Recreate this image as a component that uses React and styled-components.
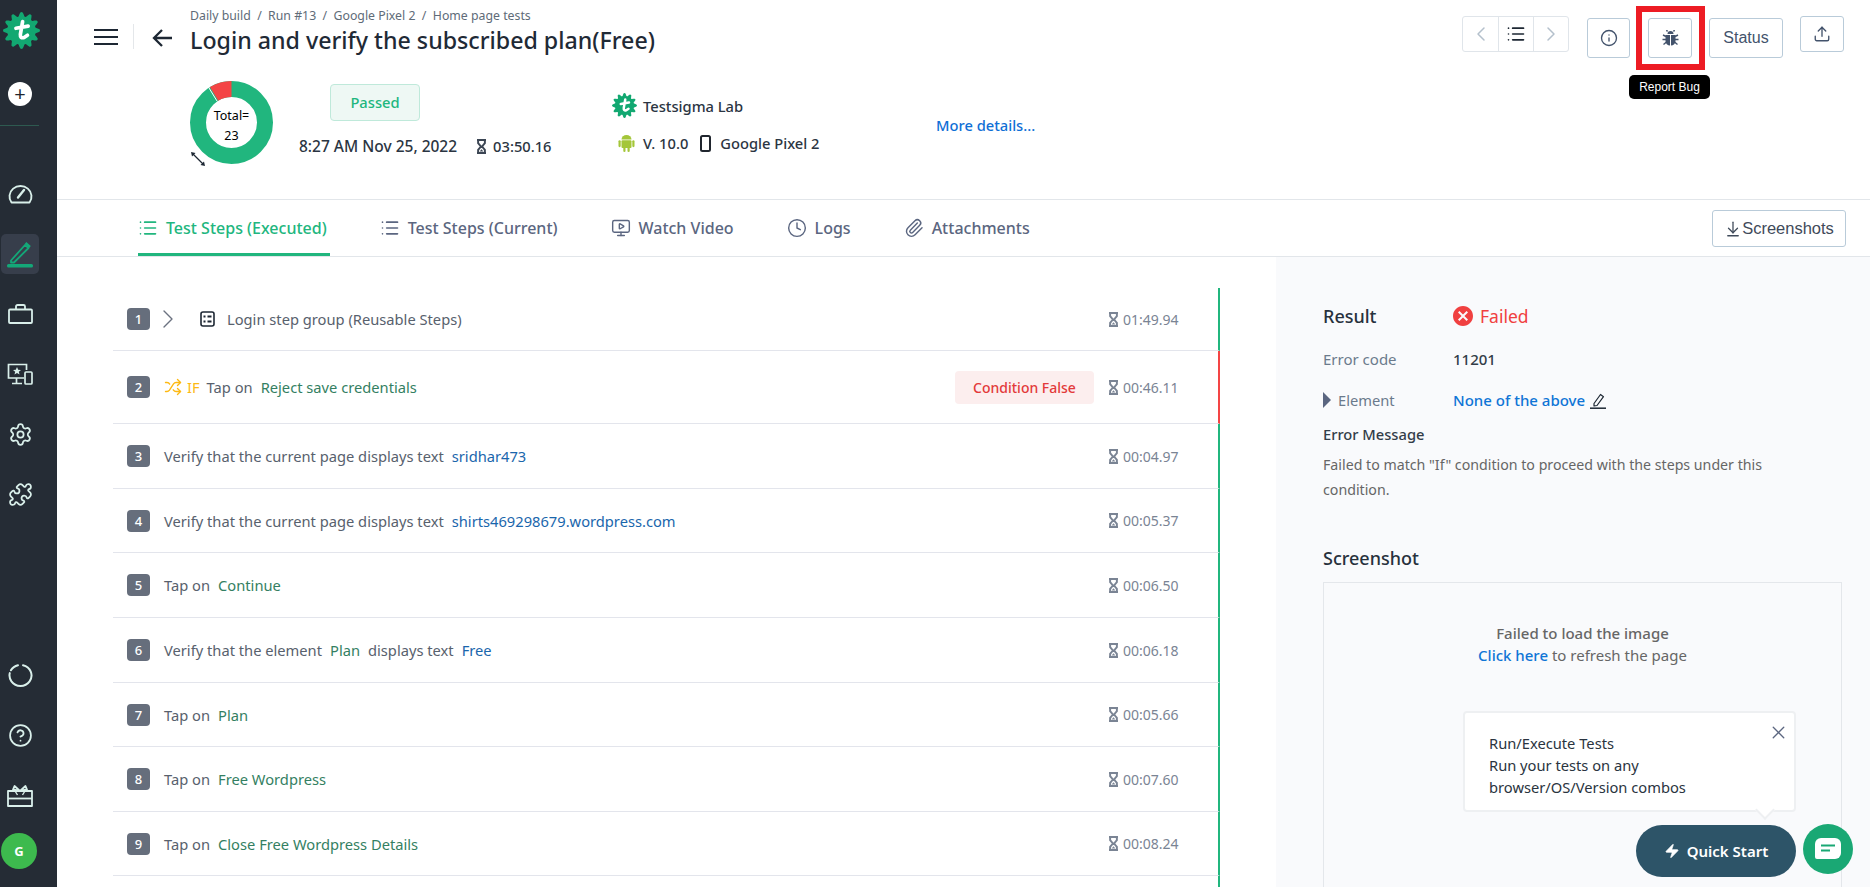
import React from 'react';
import styled, { createGlobalStyle } from 'styled-components';
import {
  ArrowDownToLine, ChevronLeft, ChevronRight, CircleHelp, Clock, Info,
  List, MonitorPlay, Paperclip, Puzzle, Settings, Shuffle, Upload, X, Zap,
} from 'lucide-react';
import { MdCancel } from 'react-icons/md';

const GlobalStyle = createGlobalStyle`
  html, body {
    margin: 0;
    height: 887px;
    overflow: hidden;
    background: #fff;
  }
  body {
    font-family: "Noto Sans", "Liberation Sans", sans-serif;
    font-size: 14.7px;
    color: #333;
  }
  * { box-sizing: border-box; }
`;

const Page = styled.div`
  position: relative;
  display: flex;
  width: 1870px;
  height: 887px;
  overflow: hidden;
`;

/* sidebar */
const Sidebar = styled.nav`
  flex: none;
  width: 57px;
  height: 100%;
  padding: 12px 0 18px;
  display: flex;
  flex-direction: column;
  background: #252c35;
  color: #d9efea;
`;

const LogoSlot = styled.div`
  width: 38px;
  margin-left: 2px;
  height: 36px;
  display: flex;
  justify-content: center;
`;

const PlusButton = styled.div`
  width: 24px;
  height: 24px;
  margin: 34px 0 0 8px;
  border-radius: 50%;
  background: #fff;
  color: #20262e;
  display: flex;
  align-items: center;
  justify-content: center;
  font-size: 20px;
  line-height: 1;
`;

const SideDivider = styled.div`
  width: 39px;
  height: 1px;
  margin: 19px 0 48px;
  background: #2e5a50;
`;

const NavItem = styled.div`
  width: 38px;
  height: 40px;
  margin: 0 0 20px 1px;
  border-radius: 5px;
  display: flex;
  align-items: center;
  justify-content: center;
  background: ${(p) => (p.$active ? '#373e4b' : 'transparent')};
`;

const BottomNav = styled.div`
  margin-top: auto;
  display: flex;
  flex-direction: column;
`;

const Avatar = styled.div`
  width: 36px;
  height: 36px;
  margin: -2px 0 0 1px;
  border-radius: 50%;
  background: #3dba4e;
  color: #fff;
  font-size: 13px;
  font-weight: 700;
  display: flex;
  align-items: center;
  justify-content: center;
`;

/* header */
const Main = styled.main`
  flex: 1;
  min-width: 0;
  display: flex;
  flex-direction: column;
`;

const Header = styled.header`
  flex: none;
  height: 200px;
  border-bottom: 1px solid #e2e6ea;
`;

const TopRow = styled.div`
  height: 69px;
  display: flex;
  align-items: flex-start;
  padding: 0 26px 0 37px;
`;

const MenuButton = styled.div`
  margin-top: 28px;
  width: 24px;
  height: 18px;
  color: #1d2733;
  display: flex;
`;

const HeadSeparator = styled.div`
  width: 1px;
  height: 25px;
  margin: 24px 18px 0 15px;
  background: #e4e7ea;
`;

const BackButton = styled.div`
  margin: 29px 18px 0 0;
  width: 20px;
  height: 18px;
  color: #1d2733;
  display: flex;
`;

const TitleBlock = styled.div`
  padding-top: 7px;
`;

const Breadcrumb = styled.div`
  height: 18px;
  line-height: 18px;
  font-size: 12.3px;
  color: #606b78;
  white-space: nowrap;
`;

const Title = styled.h1`
  margin: 0;
  height: 30px;
  line-height: 30px;
  font-size: 23.2px;
  font-weight: 500;
  color: #1f2a36;
  white-space: nowrap;
`;

const Actions = styled.div`
  margin-left: auto;
  display: flex;
  align-items: flex-start;
`;

const Pager = styled.div`
  margin: 16px 18px 0 0;
  display: flex;
  height: 36px;
  border: 1px solid #e0e5ea;
  border-radius: 3px;
`;

const PagerCell = styled.div`
  width: 35px;
  display: flex;
  align-items: center;
  justify-content: center;
  color: ${(p) => (p.$muted ? '#b4c0cc' : '#1d2733')};
  & + & {
    border-left: 1px solid #e0e5ea;
  }
`;

const ActionButton = styled.div`
  flex: none;
  margin-top: ${(p) => p.$top}px;
  margin-left: ${(p) => p.$left || 0}px;
  width: ${(p) => p.$width}px;
  height: ${(p) => p.$height || 40}px;
  border: 1px solid #b9cbd9;
  border-radius: 3px;
  background: #fff;
  color: #43536c;
  display: flex;
  align-items: center;
  justify-content: center;
  font-family: "Liberation Sans", Arial, sans-serif;
  font-size: 16px;
`;

const Highlight = styled.div`
  position: relative;
  flex: none;
  width: 69px;
  height: 64px;
  margin: 6px 4px 0 6px;
  padding: 6px;
  border: 6px solid #ed1c24;
  & > div {
    margin-top: 0;
  }
`;

const Tooltip = styled.div`
  position: absolute;
  top: 63px;
  left: -13px;
  width: 81px;
  height: 24px;
  border-radius: 5px;
  background: #000;
  color: #fff;
  font-family: "Liberation Sans", Arial, sans-serif;
  font-size: 12px;
  line-height: 24px;
  text-align: center;
`;

const SummaryRow = styled.div`
  display: flex;
  align-items: flex-start;
  padding: 12px 0 0 133px;
`;

const DonutWrap = styled.div`
  position: relative;
  flex: none;
  width: 83px;
  height: 83px;
`;

const DonutText = styled.div`
  position: absolute;
  top: 25px;
  left: 0;
  width: 100%;
  text-align: center;
  color: #000;
  font-size: 12.5px;
  line-height: 20px;
`;

const ExpandMark = styled.div`
  position: absolute;
  left: 0;
  bottom: -3px;
  color: #1d2733;
  display: flex;
`;

const StatusBlock = styled.div`
  width: 250px;
  margin-left: 26px;
  padding-top: 3px;
`;

const PassedBadge = styled.div`
  width: 90px;
  height: 37px;
  margin-left: 31px;
  border: 1px solid #bfe9da;
  border-radius: 4px;
  background: #eef8f4;
  color: #21b67e;
  font-weight: 500;
  line-height: 35px;
  text-align: center;
`;

const MetaRow = styled.div`
  margin-top: ${(p) => p.$top || 0}px;
  display: flex;
  align-items: center;
  font-weight: 500;
  color: #2b3542;
  white-space: nowrap;
  line-height: 20px;
`;

const DateText = styled.span`
  font-size: 15.5px;
`;

const DurationMark = styled.span`
  display: inline-flex;
  margin: 0 ${(p) => p.$after}px 0 ${(p) => p.$before}px;
  color: #3c4654;
`;

const DeviceBlock = styled.div`
  width: 324px;
  margin-left: 63px;
  padding-top: 12px;
`;

const LabName = styled.span`
  margin-left: 6px;
`;

const VersionText = styled.span`
  margin: 0 12px 0 8px;
`;

const DeviceName = styled.span`
  margin-left: 9px;
`;

const MoreDetails = styled.a`
  margin-top: 34px;
  color: #0f6fd6;
  font-weight: 500;
  line-height: 20px;
`;

/* tabs */
const TabBar = styled.div`
  flex: none;
  height: 57px;
  display: flex;
  align-items: flex-start;
  gap: 50px;
  padding: 0 24px 0 81px;
  border-bottom: 1px solid #e2e6ea;
`;

const Tab = styled.div`
  height: 56px;
  padding: 2px 3px 0 0;
  display: flex;
  align-items: center;
  gap: 8px;
  font-size: 16px;
  font-weight: 500;
  white-space: nowrap;
  color: ${(p) => (p.$active ? '#21b67e' : '#5b6680')};
  border-bottom: 3px solid ${(p) => (p.$active ? '#21b67e' : 'transparent')};
`;

const TabIcon = styled.span`
  width: 20px;
  display: flex;
  justify-content: center;
`;

const ScreenshotsButton = styled.div`
  margin: 10px 0 0 auto;
  width: 134px;
  height: 37px;
  border: 1px solid #b9cbd9;
  border-radius: 3px;
  display: flex;
  align-items: center;
  justify-content: center;
  color: #3f4a5a;
  font-family: "Liberation Sans", Arial, sans-serif;
  font-size: 16.5px;
`;

/* body */
const Content = styled.div`
  flex: 1;
  min-height: 0;
  display: flex;
`;

const StepsPane = styled.section`
  flex: none;
  width: 1219px;
  padding: 31px 56px 0;
`;

const StepRow = styled.div`
  height: ${(p) => p.$height}px;
  padding-left: 14px;
  display: flex;
  align-items: center;
  border-bottom: 1px solid #e3e5ec;
  border-right: 2px solid ${(p) => (p.$failed ? '#f44545' : '#21b67e')};
`;

const StepNumber = styled.div`
  flex: none;
  width: 23px;
  height: 22px;
  margin-right: 14px;
  border-radius: 4px;
  background: #666e7c;
  color: #fff;
  font-size: 13px;
  font-weight: 500;
  line-height: 22px;
  text-align: center;
`;

const GroupIcons = styled.div`
  display: flex;
  align-items: center;
  color: #1d2733;
  margin-right: 12px;
`;

const Expander = styled.span`
  display: flex;
  margin-left: -12px;
  margin-right: 16px;
  color: #6b7280;
`;

const IfMark = styled.div`
  display: flex;
  align-items: center;
  gap: 5px;
  color: #fdb913;
  margin-right: 7px;
`;

const StepText = styled.div`
  display: flex;
  gap: 8px;
  white-space: nowrap;
`;

const Part = styled.span`
  color: ${(p) => ({ element: '#347f62', value: '#1a66ac' }[p.$kind] || '#58616d')};
`;

const ConditionPill = styled.div`
  margin-left: auto;
  width: 139px;
  height: 33px;
  border-radius: 4px;
  background: #fceeee;
  color: #e33a3a;
  font-size: 14px;
  font-weight: 500;
  line-height: 33px;
  text-align: center;
`;

const Duration = styled.div`
  flex: none;
  width: 109px;
  margin-left: ${(p) => (p.$afterPill ? '15px' : 'auto')};
  display: flex;
  align-items: center;
  gap: 5px;
  font-size: 14px;
  color: #7a8494;
`;

const DetailPane = styled.aside`
  flex: 1;
  padding: 47px 28px 0 47px;
  background: #f9fafc;
`;

const DetailGrid = styled.div`
  display: grid;
  grid-template-columns: 130px 1fr;
  align-items: center;
`;

const ResultLabel = styled.div`
  height: 24px;
  line-height: 24px;
  font-size: 18px;
  font-weight: 500;
  color: #27313c;
`;

const FailedValue = styled.div`
  display: flex;
  align-items: center;
  gap: 5px;
  height: 24px;
  margin-left: -2px;
  color: #f04040;
  font-size: 17.5px;
`;

const FieldLabel = styled.div`
  display: flex;
  align-items: center;
  gap: 7px;
  height: 20px;
  margin-top: ${(p) => p.$top}px;
  font-size: ${(p) => p.$size || 14.7}px;
  color: #6b7a8c;
`;

const FieldValue = styled.div`
  display: flex;
  align-items: center;
  gap: 5px;
  height: 20px;
  margin-top: ${(p) => p.$top}px;
  font-size: 15px;
  color: ${(p) => (p.$link ? '#0f75d6' : '#333d48')};
  font-weight: 500;
`;

const Caret = styled.span`
  width: 0;
  height: 0;
  border-left: 8px solid #5b6680;
  border-top: 8px solid transparent;
  border-bottom: 8px solid transparent;
`;

const MessageTitle = styled.div`
  margin-top: 14px;
  height: 20px;
  line-height: 20px;
  font-weight: 500;
  color: #333d48;
`;

const MessageBody = styled.p`
  margin: 8px 0 0;
  width: 470px;
  font-size: 14.2px;
  line-height: 25px;
  color: #666;
`;

const SectionTitle = styled.h2`
  margin: 44px 0 0;
  height: 24px;
  line-height: 24px;
  font-size: 18px;
  font-weight: 500;
  color: #27313c;
`;

const ShotBox = styled.div`
  height: 320px;
  margin: 12px 0 0;
  padding-top: 39px;
  border: 1px solid #e4e7eb;
  text-align: center;
  font-size: 15px;
  line-height: 22px;
  color: #666;
  font-weight: 500;
`;

const RefreshLink = styled.a`
  color: #0f75d6;
`;

const RefreshRest = styled.span`
  font-weight: 400;
`;

/* floating help */
const Dock = styled.div`
  position: absolute;
  right: 17px;
  bottom: 10px;
  display: flex;
  align-items: flex-start;
  gap: 7px;
`;

const QuickStart = styled.div`
  position: relative;
  width: 160px;
  height: 52px;
  border-radius: 26px;
  background: #2d5468;
  color: #fff;
  font-size: 15px;
  font-weight: 600;
  display: flex;
  align-items: center;
  justify-content: center;
  gap: 7px;
`;

const ChatButton = styled.div`
  width: 50px;
  height: 50px;
  margin-top: -1px;
  border-radius: 50%;
  background: #1aa874;
  display: flex;
  align-items: center;
  justify-content: center;
`;

const Popover = styled.div`
  position: absolute;
  right: 0;
  bottom: 65px;
  width: 333px;
  height: 101px;
  padding: 19px 24px;
  border: 2px solid #eef0f2;
  border-radius: 4px;
  background: #fff;
  color: #2a3440;
  font-weight: 400;
  font-size: 14.7px;
  line-height: 22px;
  &::after {
    content: '';
    position: absolute;
    right: 22px;
    bottom: -7px;
    width: 12px;
    height: 12px;
    background: #fff;
    border-right: 2px solid #eef0f2;
    border-bottom: 2px solid #eef0f2;
    transform: rotate(45deg);
  }
`;

const PopoverClose = styled.span`
  position: absolute;
  top: 9px;
  right: 5px;
  display: flex;
  color: #5b6680;
`;

const gearPath = (() => {
  const teeth = 12;
  const points = [];
  for (let i = 0; i < teeth * 8; i++) {
    const a = (i / (teeth * 8)) * Math.PI * 2;
    const wave = Math.cos(a * teeth);
    const r = 44 + 6 * Math.sign(wave) * Math.pow(Math.abs(wave), 0.6);
    points.push(`${(50 + r * Math.sin(a)).toFixed(1)} ${(50 - r * Math.cos(a)).toFixed(1)}`);
  }
  return `M${points.join('L')}Z`;
})();

const Logo = ({ size }) => (
  <svg width={size} height={size} viewBox="0 0 100 100">
    <path d={gearPath} fill="#12a871" />
    <path d="M53 26 L47 60 Q46 72 57 69 L66 63 M35 44 L68 38" fill="none" stroke="#fff" strokeWidth="10" strokeLinecap="round" strokeLinejoin="round" />
  </svg>
);

const MenuIcon = () => (
  <svg width="24" height="18" viewBox="0 0 24 18" fill="none" stroke="currentColor" strokeWidth="2.2">
    <path d="M0 2h24M0 9h24M0 16h24" />
  </svg>
);

const BackIcon = () => (
  <svg width="20" height="18" viewBox="0 0 20 18" fill="none" stroke="currentColor" strokeWidth="2.3">
    <path d="M20 9H2M10 1L2 9l8 8" />
  </svg>
);

const BugIcon = () => (
  <svg width="17" height="16" viewBox="0 0 17 16" fill="currentColor" stroke="currentColor">
    <path d="M5.5 4a3 3 0 0 1 6 0z" stroke="none" />
    <path d="M3.5 5h4.5v10.5a4.5 4.5 0 0 1-4.5-4.5zM9 5h4.5v6A4.5 4.5 0 0 1 9 15.5z" stroke="none" />
    <path d="M5.5 1.5L4.5 0M11.5 1.5L12.5 0M4 6.5L1 5M4 9.5H.5M4.5 12L1.5 14.5M13 6.5L16 5M13 9.5h3.5M12.5 12l3 2.5" fill="none" strokeWidth="1.4" />
  </svg>
);

const Hourglass = ({ width = 9, height = 15 }) => (
  <svg width={width} height={height} viewBox="0 0 12 20">
    <path d="M0 1.3h12M0 18.7h12" fill="none" stroke="currentColor" strokeWidth="2.6" />
    <path d="M1.5 1v4.5L5.2 10l-3.7 4.5V19M10.5 1v4.5L6.8 10l3.7 4.5V19" fill="none" stroke="currentColor" strokeWidth="2.6" />
    <path d="M3.5 16.5h5L6 13.5z" fill="currentColor" />
  </svg>
);

const DashIcon = () => (
  <svg width="25" height="20" viewBox="0 2.5 25 19" fill="none" stroke="currentColor" strokeWidth="1.9" strokeLinejoin="round" strokeLinecap="round">
    <path d="M3.5 20.5a11 10.5 0 1 1 18 0z" />
    <path d="M10 15.5l6-7.5" strokeWidth="2.4" />
  </svg>
);

const PencilIcon = () => (
  <svg width="26" height="28" viewBox="0 0 26 28" fill="none">
    <path d="M4 20.5 L18 5 l3.5 3 L7 22.5 H4z" stroke="#14a878" strokeWidth="1.8" strokeLinejoin="round" />
    <path d="M18.5 3 l4.5 4" stroke="#14a878" strokeWidth="2.5" />
    <rect x="0" y="24" width="26" height="3.5" rx="1.5" fill="#14a878" />
  </svg>
);

const BriefcaseIcon = () => (
  <svg width="25" height="20" viewBox="0 0 25 20" fill="none" stroke="currentColor" strokeWidth="1.8">
    <rect x="1" y="5.5" width="23" height="13.5" rx="1" />
    <path d="M8 5.5V2.5a1.5 1.5 0 0 1 1.5-1.5h6a1.5 1.5 0 0 1 1.5 1.5v3" />
  </svg>
);

const DevicesIcon = () => (
  <svg width="26" height="25" viewBox="0 0 26 25" fill="none" stroke="currentColor" strokeWidth="1.7">
    <path d="M17 16H1.5V2.5h18V8" />
    <path d="M9.5 16v5M5 21.5h10" />
    <path d="M10 5l1.2 2.7 2.8.2-2.2 1.9.7 2.8L10 11.1l-2.5 1.5.7-2.8L6 7.9l2.8-.2z" fill="currentColor" stroke="none" />
    <rect x="18" y="10" width="7" height="12" rx="1" />
  </svg>
);

const RingIcon = () => (
  <svg width="26" height="24" viewBox="0 0 26 24" fill="none" stroke="currentColor" strokeWidth="2">
    <path d="M16 2.2A11 10.5 0 1 1 11 2.2M20 4" strokeLinecap="round" strokeDasharray="50 3 14 40" />
  </svg>
);

const GiftIcon = () => (
  <svg width="26" height="23" viewBox="0 0 26 23" fill="none" stroke="currentColor" strokeWidth="1.8" strokeLinejoin="round">
    <path d="M1 7h24v15H1z" />
    <path d="M1 14.5h24" />
    <path d="M13 7L7.5 2 6 5.5zM13 7l5.5-5L20 5.5z" />
    <path d="M8 7l2.5 4M18 7l-2.5 4" strokeWidth="1.4" />
  </svg>
);

const GroupIcon = () => (
  <svg width="15" height="16" viewBox="0 0 15 16" fill="none" stroke="currentColor" strokeWidth="1.6">
    <rect x="1" y="1" width="13" height="14" rx="2" />
    <path d="M3.5 5.5h2M3.5 10.5h2M7.5 5.5h4M7.5 10.5h4" strokeWidth="2" />
  </svg>
);

const AndroidIcon = () => (
  <svg width="17" height="18" viewBox="0 0 17 18" fill="#a4c639">
    <path d="M3.5 5.5a5 4.6 0 0 1 10 0z" />
    <rect x="3.5" y="6.2" width="10" height="7.8" rx="1" />
    <rect x="0.5" y="6.2" width="2.2" height="7" rx="1.1" />
    <rect x="14.3" y="6.2" width="2.2" height="7" rx="1.1" />
    <rect x="5.3" y="13" width="2.2" height="5" rx="1.1" />
    <rect x="9.5" y="13" width="2.2" height="5" rx="1.1" />
  </svg>
);

const PhoneIcon = () => (
  <svg width="11" height="17" viewBox="0 0 11 17" fill="none" stroke="#20262e" strokeWidth="2">
    <rect x="1" y="1" width="9" height="15" rx="1.5" />
  </svg>
);

const ExpandIcon = () => (
  <svg width="16" height="16" viewBox="0 0 16 16" fill="none" stroke="currentColor" strokeWidth="1.2">
    <path d="M2.5 2.5l11 11" />
    <path d="M1 1l4.5 1L2 5.5zM15 15l-4.5-1 3.5-3.5z" fill="currentColor" stroke="none" />
  </svg>
);

const EditIcon = () => (
  <svg width="16" height="17" viewBox="0 0 16 17" fill="none" stroke="#1d2733" strokeWidth="1.2">
    <path d="M4 11.5 L10.5 2.5 l3 2.2 L7 13.5 L4 14z" strokeLinejoin="round" />
    <path d="M0 16.2h16" strokeWidth="1.5" />
  </svg>
);

const ChatIcon = () => (
  <svg width="26" height="22" viewBox="0 0 26 22">
    <path d="M6 0h14a6 6 0 0 1 6 6v9a6 6 0 0 1-6 6H2a2 2 0 0 1-2-2V6a6 6 0 0 1 6-6z" fill="#fff" />
    <path d="M6 7.5h14M6 12.5h9" stroke="#1aa874" strokeWidth="2.2" />
  </svg>
);

const Donut = () => (
  <svg width="83" height="83" viewBox="0 0 83 83">
    <circle cx="41.5" cy="41.5" r="33.5" fill="none" stroke="#21b67e" strokeWidth="16" />
    <path d="M41.5 8 A33.5 33.5 0 0 0 24.1 12.9" fill="none" stroke="#f44545" strokeWidth="16" />
    <path d="M17.5 4.5 L27 20" stroke="#fff" strokeWidth="1" />
  </svg>
);

const steps = [
  { n: 1, h: 63, time: '01:49.94', group: true, parts: [['', 'Login step group (Reusable Steps)']] },
  { n: 2, h: 73, time: '00:46.11', condition: true, parts: [['', 'Tap on'], ['element', 'Reject save credentials']] },
  { n: 3, h: 65, time: '00:04.97', parts: [['', 'Verify that the current page displays text'], ['value', 'sridhar473']] },
  { n: 4, h: 64, time: '00:05.37', parts: [['', 'Verify that the current page displays text'], ['value', 'shirts469298679.wordpress.com']] },
  { n: 5, h: 65, time: '00:06.50', parts: [['', 'Tap on'], ['element', 'Continue']] },
  { n: 6, h: 65, time: '00:06.18', parts: [['', 'Verify that the element'], ['element', 'Plan'], ['', 'displays text'], ['value', 'Free']] },
  { n: 7, h: 64, time: '00:05.66', parts: [['', 'Tap on'], ['element', 'Plan']] },
  { n: 8, h: 65, time: '00:07.60', parts: [['', 'Tap on'], ['element', 'Free Wordpress']] },
  { n: 9, h: 64, time: '00:08.24', parts: [['', 'Tap on'], ['element', 'Close Free Wordpress Details']] },
];

const Step = ({ step }) => (
  <StepRow $height={step.h} $failed={step.condition}>
    <StepNumber>{step.n}</StepNumber>
    {step.group && (
      <GroupIcons>
        <Expander><ChevronRight size={32} strokeWidth={1} /></Expander>
        <GroupIcon />
      </GroupIcons>
    )}
    {step.condition && (
      <IfMark>
        <Shuffle size={18} strokeWidth={1.8} />
        IF
      </IfMark>
    )}
    <StepText>
      {step.parts.map(([kind, text]) => <Part key={text} $kind={kind}>{text}</Part>)}
    </StepText>
    {step.condition && <ConditionPill>Condition False</ConditionPill>}
    <Duration $afterPill={step.condition}>
      <Hourglass />
      {step.time}
    </Duration>
  </StepRow>
);

export default function App() {
  return (
    <Page>
      <GlobalStyle />
      <Sidebar>
        <LogoSlot><Logo size={37} /></LogoSlot>
        <PlusButton>+</PlusButton>
        <SideDivider />
        <NavItem><DashIcon /></NavItem>
        <NavItem $active><PencilIcon /></NavItem>
        <NavItem><BriefcaseIcon /></NavItem>
        <NavItem><DevicesIcon /></NavItem>
        <NavItem><Settings size={25} strokeWidth={1.7} /></NavItem>
        <NavItem><Puzzle size={25} strokeWidth={1.7} /></NavItem>
        <BottomNav>
          <NavItem><RingIcon /></NavItem>
          <NavItem><CircleHelp size={25} strokeWidth={1.7} /></NavItem>
          <NavItem><GiftIcon /></NavItem>
          <Avatar>G</Avatar>
        </BottomNav>
      </Sidebar>
      <Main>
        <Header>
          <TopRow>
            <MenuButton><MenuIcon /></MenuButton>
            <HeadSeparator />
            <BackButton><BackIcon /></BackButton>
            <TitleBlock>
              <Breadcrumb>Daily build&nbsp; /&nbsp; Run #13&nbsp; /&nbsp; Google Pixel 2&nbsp; /&nbsp; Home page tests</Breadcrumb>
              <Title>Login and verify the subscribed plan(Free)</Title>
            </TitleBlock>
            <Actions>
              <Pager>
                <PagerCell $muted><ChevronLeft size={24} strokeWidth={1.5} /></PagerCell>
                <PagerCell><List size={20} strokeWidth={2} /></PagerCell>
                <PagerCell $muted><ChevronRight size={24} strokeWidth={1.5} /></PagerCell>
              </Pager>
              <ActionButton $top={18} $width={43}><Info size={18} strokeWidth={1.8} /></ActionButton>
              <Highlight>
                <ActionButton $width={44}><BugIcon /></ActionButton>
                <Tooltip>Report Bug</Tooltip>
              </Highlight>
              <ActionButton $top={18} $width={74}>Status</ActionButton>
              <ActionButton $top={16} $left={17} $width={44} $height={36}><Upload size={18} strokeWidth={1.8} /></ActionButton>
            </Actions>
          </TopRow>
          <SummaryRow>
            <DonutWrap>
              <Donut />
              <DonutText>Total=<br />23</DonutText>
              <ExpandMark><ExpandIcon /></ExpandMark>
            </DonutWrap>
            <StatusBlock>
              <PassedBadge>Passed</PassedBadge>
              <MetaRow $top={15}>
                <DateText>8:27 AM Nov 25, 2022</DateText>
                <DurationMark $before={20} $after={7}><Hourglass /></DurationMark>
                03:50.16
              </MetaRow>
            </StatusBlock>
            <DeviceBlock>
              <MetaRow>
                <Logo size={25} />
                <LabName>Testsigma Lab</LabName>
              </MetaRow>
              <MetaRow $top={15}>
                <DurationMark $before={6} $after={0}><AndroidIcon /></DurationMark>
                <VersionText>V. 10.0</VersionText>
                <PhoneIcon />
                <DeviceName>Google Pixel 2</DeviceName>
              </MetaRow>
            </DeviceBlock>
            <MoreDetails>More details...</MoreDetails>
          </SummaryRow>
        </Header>
        <TabBar>
          <Tab $active><TabIcon><List size={24} strokeWidth={2} /></TabIcon>Test Steps (Executed)</Tab>
          <Tab><TabIcon><List size={24} strokeWidth={2} /></TabIcon>Test Steps (Current)</Tab>
          <Tab><TabIcon><MonitorPlay size={22} strokeWidth={1.7} /></TabIcon>Watch Video</Tab>
          <Tab><TabIcon><Clock size={22} strokeWidth={1.7} /></TabIcon>Logs</Tab>
          <Tab><TabIcon><Paperclip size={22} strokeWidth={1.7} /></TabIcon>Attachments</Tab>
          <ScreenshotsButton><ArrowDownToLine size={18} strokeWidth={1.7} />Screenshots</ScreenshotsButton>
        </TabBar>
        <Content>
          <StepsPane>
            {steps.map((step) => <Step key={step.n} step={step} />)}
            <StepRow $height={65} />
          </StepsPane>
          <DetailPane>
            <DetailGrid>
              <ResultLabel>Result</ResultLabel>
              <FailedValue><MdCancel size={24} />Failed</FailedValue>
              <FieldLabel $top={21} $size={15}>Error code</FieldLabel>
              <FieldValue $top={21}>11201</FieldValue>
              <FieldLabel $top={21}><Caret />Element</FieldLabel>
              <FieldValue $top={21} $link>None of the above <EditIcon /></FieldValue>
            </DetailGrid>
            <MessageTitle>Error Message</MessageTitle>
            <MessageBody>Failed to match "If" condition to proceed with the steps under this condition.</MessageBody>
            <SectionTitle>Screenshot</SectionTitle>
            <ShotBox>
              Failed to load the image<br />
              <RefreshLink>Click here</RefreshLink> <RefreshRest>to refresh the page</RefreshRest>
            </ShotBox>
          </DetailPane>
        </Content>
      </Main>
      <Dock>
        <QuickStart>
          <Zap size={16} fill="#fff" strokeWidth={1} />
          Quick Start
          <Popover>
            Run/Execute Tests<br />
            Run your tests on any<br />
            browser/OS/Version combos
            <PopoverClose><X size={21} strokeWidth={1.5} /></PopoverClose>
          </Popover>
        </QuickStart>
        <ChatButton><ChatIcon /></ChatButton>
      </Dock>
    </Page>
  );
}
